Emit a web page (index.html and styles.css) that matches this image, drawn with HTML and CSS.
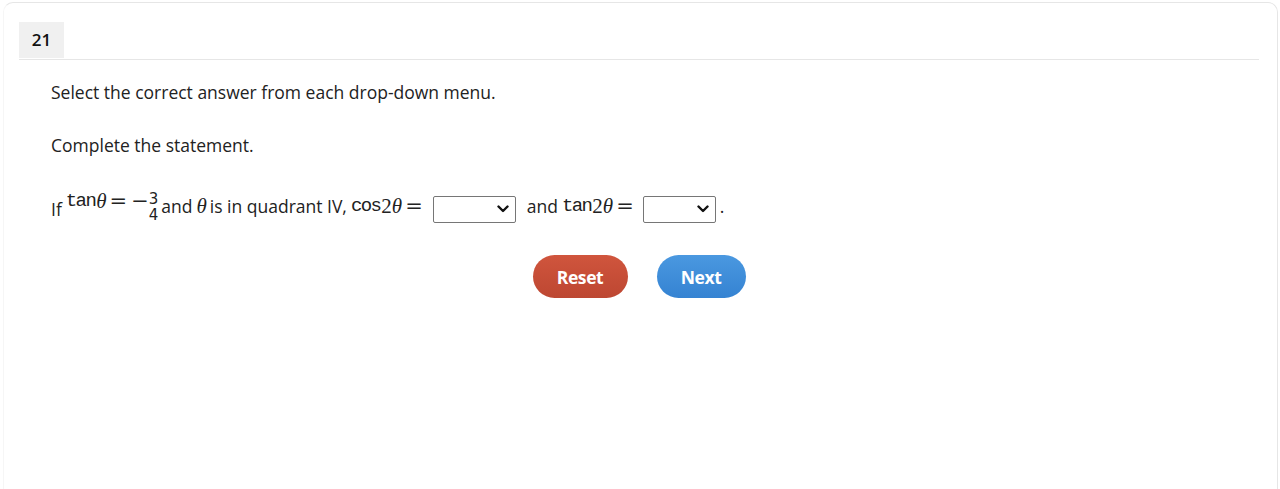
FILE: index.html
```html
<!DOCTYPE html>
<html>
<head>
<meta charset="utf-8">
<link rel="stylesheet" href="styles.css">
</head>
<body>
<div class="card">
  <div class="header">
    <div class="qnum">21</div>
  </div>
  <div class="content">
    <p class="instr">Select the correct answer from each drop-down menu.</p>
    <p class="instr second">Complete the statement.</p>
    <div class="stmt">
      <span class="txt if">If</span>
      <span class="math raised"><span class="fn">tan</span><span class="var">θ</span><span class="op">=</span><span class="op minus">−</span><span class="frac"><span class="num">3</span><span class="den">4</span></span></span>
      <span class="txt">and</span>
      <span class="math"><span class="var">θ</span></span><span class="txt">is in quadrant IV,</span>
      <span class="math"><span class="fn">cos</span><span class="n">2</span><span class="var">θ</span><span class="op">=</span></span>
      <select class="dd w1"><option></option></select>
      <span class="txt">and</span>
      <span class="math"><span class="fn">tan</span><span class="n">2</span><span class="var">θ</span><span class="op">=</span></span>
      <select class="dd w2"><option></option></select>
      <span class="txt">.</span>
    </div>
    <div class="buttons">
      <button class="btn reset">Reset</button>
      <button class="btn next">Next</button>
    </div>
  </div>
</div>
</body>
</html>
```
FILE: styles.css
```css
html, body {
  margin: 0;
  padding: 0;
  background: #ffffff;
}
body {
  padding: 2px 2px 0 3px;
  font-family: "Open Sans", "Liberation Sans", sans-serif;
  color: #222;
}
.card {
  border: 1px solid #e6e6e6;
  border-left-color: #f6f6f6;
  border-bottom: none;
  border-radius: 10px 10px 0 0;
  height: 487px;
  box-sizing: border-box;
  padding: 19px 18px 0 15px;
}
.header {
  border-bottom: 1px solid #e6e6e6;
  height: 37px;
}
.qnum {
  display: inline-block;
  background: #f0f0f0;
  width: 45px;
  height: 36px;
  line-height: 36px;
  text-align: center;
  font-weight: 600;
  font-size: 17px;
  color: #111;
}
.content {
  padding-left: 32px;
}
.instr {
  margin: 0;
  font-size: 17.5px;
  line-height: 24px;
  padding-top: 20px;
}
.instr.second {
  padding-top: 29px;
}
.stmt {
  display: flex;
  align-items: center;
  margin-top: 27px;
  height: 40px;
  font-size: 17.5px;
}
.txt {
  margin-right: 4px;
  line-height: 24px;
  position: relative;
  top: 2px;
}
.txt.if { margin-right: 4px; top: 5px; }
.math {
  display: inline-flex;
  align-items: center;
  font-family: "DejaVu Serif", "Liberation Serif", serif;
  font-size: 18px;
  margin-right: 3px;
  position: relative;
  top: 2px;
}
.math.raised { top: -3px; margin-right: 3px; }
.fn {
  font-family: "Liberation Mono", "DejaVu Sans Mono", monospace;
  font-size: 19px;
  letter-spacing: -1.6px;
  margin-right: 1px;
}
.var {
  font-style: italic;
  font-family: "Liberation Serif", serif;
  font-size: 21px;
}
.n {
  font-family: "Liberation Serif", serif;
  font-size: 21px;
}
.op {
  font-family: "DejaVu Serif", serif;
  font-size: 21px;
  margin: 0 3px;
}
.op.minus { margin: 0 0 0 1px; }
.frac {
  display: inline-flex;
  flex-direction: column;
  align-items: center;
  font-family: "DejaVu Sans", sans-serif;
  font-size: 15px;
  line-height: 16px;
  position: relative;
  top: 6px;
}
.dd {
  appearance: none;
  -webkit-appearance: none;
  width: 83px;
  height: 27px;
  border: 1px solid #767676;
  border-radius: 2px;
  background: #fff url("data:image/svg+xml;utf8,<svg xmlns='http://www.w3.org/2000/svg' width='12' height='8' viewBox='0 0 12 8'><path d='M1.5 1.5 L6 6 L10.5 1.5' fill='none' stroke='%23111' stroke-width='2.4' stroke-linecap='round' stroke-linejoin='round'/></svg>") no-repeat right 6px center;
  margin: 0 11px 0 4px;
  position: relative;
  top: 5px;
  font-family: "Open Sans", sans-serif;
}
.dd.w2 { width: 73px; margin-left: 3px; margin-right: 4px; }
.buttons {
  display: flex;
  justify-content: center;
  gap: 29px;
  margin-top: 31px;
  padding-right: 32px;
}
.btn {
  height: 43px;
  border: none;
  border-radius: 22px;
  color: #fff;
  font-family: "Open Sans", sans-serif;
  font-weight: 700;
  font-size: 17.5px;
  letter-spacing: -0.4px;
}
.reset {
  width: 95px;
  background: linear-gradient(#d0553d, #bd4732);
}
.next {
  width: 89px;
  background: linear-gradient(#4a98e0, #3583d2);
}
```
